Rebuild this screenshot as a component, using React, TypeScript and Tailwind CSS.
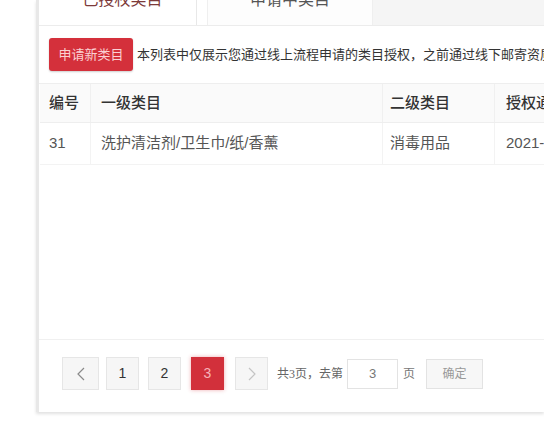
const font = "font-['Liberation_Sans','Noto_Sans_CJK_SC',sans-serif]";

const columns = [
  { key: 'id', label: '编号', className: 'w-[51px] pl-[9px]' },
  { key: 'first', label: '一级类目', className: 'w-[292px] pl-[10px]' },
  { key: 'second', label: '二级类目', className: 'w-[112px] pl-[7px]' },
  { key: 'date', label: '授权通过时间', className: 'flex-1 pl-[11px]' },
];

const rows = [
  { id: '31', first: '洗护清洁剂/卫生巾/纸/香薰', second: '消毒用品', date: '2021-04-12' },
];

function Tabs() {
  return (
    <div className="-mt-[14px] flex h-[40px] border-b border-[#ececec] bg-[#f5f5f5]">
      <div className="flex w-[158px] items-start justify-center border-r border-[#e8e8e8] bg-white pl-[10px]">
        <span className="text-[16px] leading-[28px] text-[#7d3a3a]">已授权类目</span>
      </div>
      <div className="w-[10px] bg-white" />
      <div className="flex w-[166px] items-start justify-center border-x border-[#efefef] bg-[#fdfdfd]">
        <span className="text-[16px] leading-[28px] text-[#555]">申请中类目</span>
      </div>
    </div>
  );
}

function Pager() {
  const box = 'flex h-[33px] w-[33px] items-center justify-center border border-[#e6e6e6] bg-[#f6f6f6] text-[14px]';
  return (
    <div className="flex items-center pl-[23px] pt-[17px]">
      <div className={`${box} w-[37px] text-[#888]`}>
        <svg width="8" height="14" viewBox="0 0 8 14" fill="none" stroke="#8a8a8a" strokeWidth="1.2">
          <path d="M7 1L1 7l6 6" />
        </svg>
      </div>
      <div className={`${box} ml-[7px] text-[#333]`}>1</div>
      <div className={`${box} ml-[9px] text-[#333]`}>2</div>
      <div className="ml-[10px] flex h-[33px] w-[33px] items-center justify-center bg-[#d2303b] text-[14px] text-[#f7b3b8] shadow-[0_0_4px_rgba(210,48,59,0.4)]">
        3
      </div>
      <div className={`${box} ml-[11px]`}>
        <svg width="8" height="14" viewBox="0 0 8 14" fill="none" stroke="#c4c4c4" strokeWidth="1.2">
          <path d="M1 1l6 6-6 6" />
        </svg>
      </div>
      <span className="ml-[9px] font-['Liberation_Serif','Noto_Sans_CJK_SC',serif] text-[12px] text-[#666]">
        共3页，去第
      </span>
      <div className="ml-[4px] flex h-[30px] w-[51px] items-center justify-center border border-[#e3e3e3] bg-white text-[13px] text-[#777]">
        3
      </div>
      <span className="ml-[5px] font-['Liberation_Serif','Noto_Sans_CJK_SC',serif] text-[12px] text-[#777]">页</span>
      <div className="ml-[11px] flex h-[30px] w-[57px] items-center justify-center border border-[#e3e3e3] bg-[#f7f7f7] font-['Liberation_Serif','Noto_Sans_CJK_SC',serif] text-[12px] text-[#999]">
        确定
      </div>
    </div>
  );
}

export default function App() {
  return (
    <div className={`${font} h-[423px] w-[544px] overflow-hidden bg-white pl-[36px]`}>
      <div className="flex h-[412px] flex-col border-l-[3px] border-[#e8e8e8] bg-white shadow-[0_2px_3px_rgba(0,0,0,0.12)]">
        <Tabs />

        <div className="flex items-center border-b border-[#eeeeee] pb-[12px] pl-[10px] pt-[12px]">
          <button className="h-[33px] w-[84px] shrink-0 rounded-[3px] bg-[#d4303b] text-[13px] text-[#fbd0d3] shadow-[0_1px_2px_rgba(0,0,0,0.2)]">
            申请新类目
          </button>
          <span className="ml-[4px] whitespace-nowrap text-[13px] text-[#333]">
            本列表中仅展示您通过线上流程申请的类目授权，之前通过线下邮寄资质已经获得的类目授权请到已授权类目中查看
          </span>
        </div>

        <div className="flex h-[256px] flex-col border-b border-[#f0f0f0] pl-[1px]">
          <div className="flex h-[39px] items-center border-b border-[#eeeeee] bg-[#fafafa]">
            {columns.map(c => (
              <div
                key={c.key}
                className={`${c.className} flex h-full shrink-0 items-center whitespace-nowrap border-r border-[#f0f0f0] text-[15px] font-medium text-[#333]`}
              >
                {c.label}
              </div>
            ))}
          </div>
          {rows.map(r => (
            <div key={r.id} className="flex h-[42px] items-center border-b border-[#f3f3f3]">
              {columns.map(c => (
                <div
                  key={c.key}
                  className={`${c.className} flex h-full shrink-0 items-center whitespace-nowrap border-r border-[#f3f3f3] text-[15px] text-[#555]`}
                >
                  {r[c.key as keyof typeof r]}
                </div>
              ))}
            </div>
          ))}
        </div>

        <Pager />
      </div>
    </div>
  );
}
